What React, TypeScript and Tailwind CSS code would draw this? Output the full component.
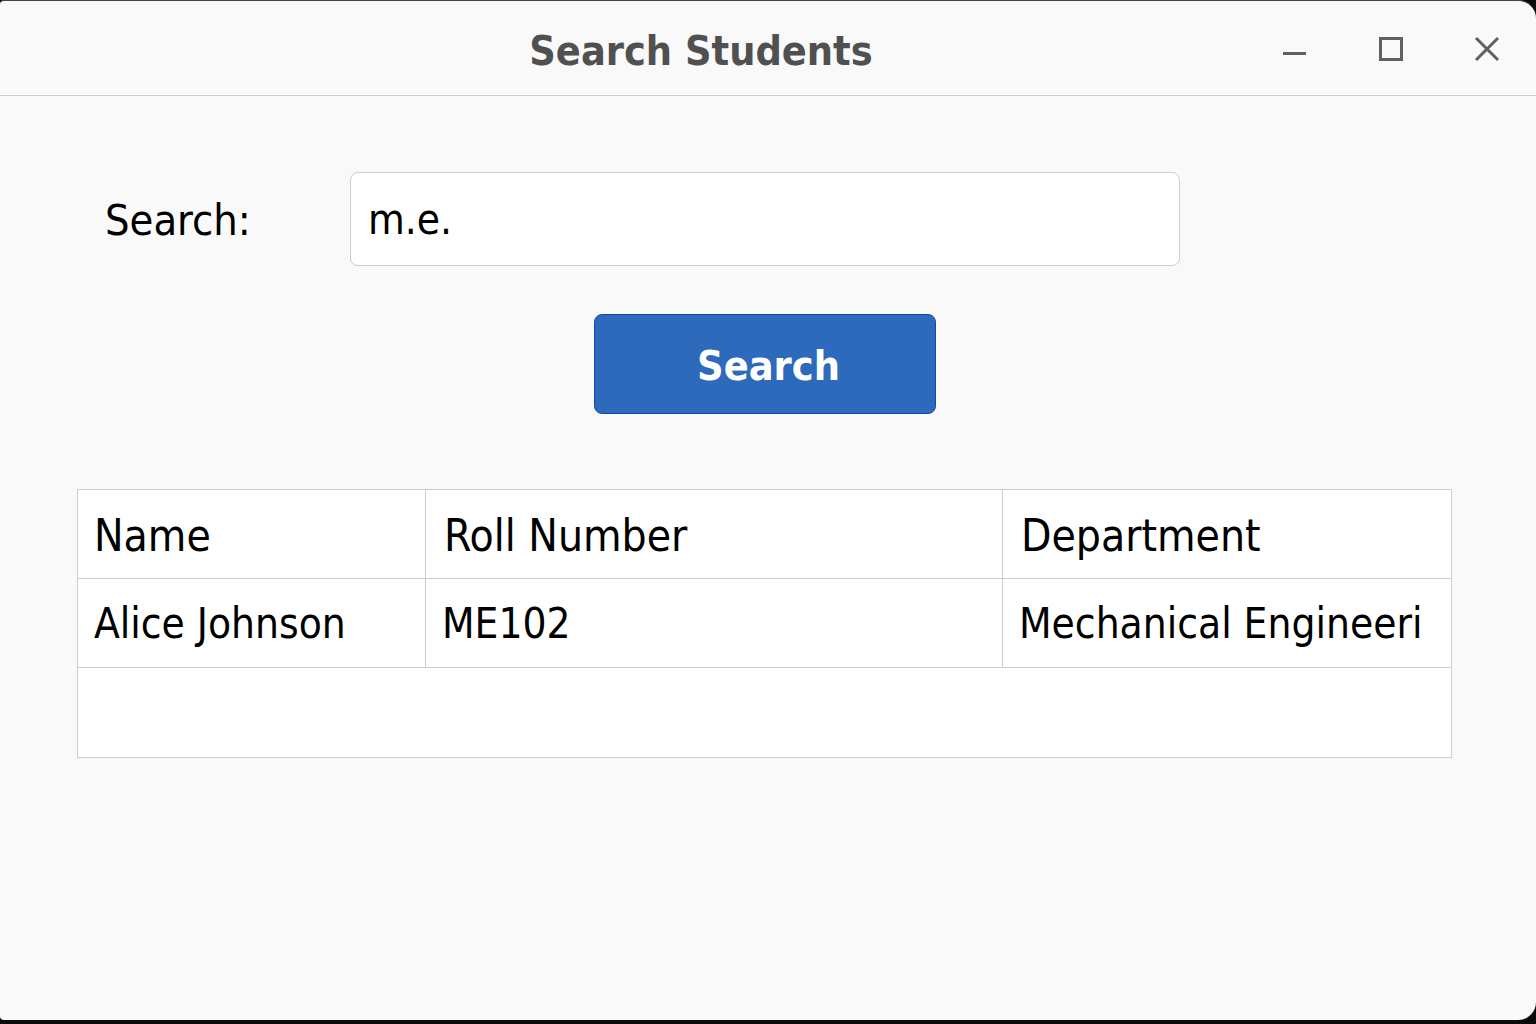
import { useState } from "react";

const head = "border border-[#cdcdcd] pt-1 pb-0 text-left text-[44px] font-normal whitespace-nowrap";
const cell = "border border-[#cdcdcd] px-4 pt-0.5 pb-0 text-left whitespace-nowrap";

export default function App() {
  const [query, setQuery] = useState("m.e.");
  return (
    <div className="min-h-screen bg-[#0a0a0a] flex flex-col pb-1 font-['DejaVu_Sans_Condensed','DejaVu_Sans',sans-serif] text-black">
      <div className="flex-1 flex flex-col rounded-l-sm rounded-r-[18px] border-t border-[#444444] bg-[#f9f9f9] overflow-hidden">
        <header className="h-[95px] shrink-0 border-b border-[#cdcdcd] flex items-center pl-[125px]">
          <h1 className="flex-1 pt-1.5 text-center text-[41px] leading-12 font-bold text-[#505050]">Search Students</h1>
          <div className="flex items-center gap-[60px] pr-[31px] text-[#606060]">
            <button type="button" aria-label="Minimize">
              <svg width="36" height="36" viewBox="0 0 36 36" fill="none" stroke="currentColor" strokeWidth="3"><path d="M6 23.5H29" /></svg>
            </button>
            <button type="button" aria-label="Maximize">
              <svg width="36" height="36" viewBox="0 0 36 36" fill="none" stroke="currentColor" strokeWidth="3"><path d="M7.5 8.5H28.5V29.5H7.5Z" /></svg>
            </button>
            <button type="button" aria-label="Close">
              <svg width="36" height="36" viewBox="0 0 36 36" fill="none" stroke="currentColor" strokeWidth="3"><path d="M7 8L29 30M29 8L7 30" /></svg>
            </button>
          </div>
        </header>
        <main className="pl-[77px] pr-[84px] pt-[76px] pb-12 text-[42px] leading-12">
          <form onSubmit={(e) => e.preventDefault()}>
            <div className="flex items-center pl-7">
              <label htmlFor="query" className="w-[245px] shrink-0 pt-0.5 text-[43px]">Search:</label>
              <input
                id="query"
                type="text"
                value={query}
                onChange={(e) => setQuery(e.target.value)}
                className="mr-[272px] h-[94px] min-w-0 flex-1 rounded-lg border border-[#cdcdcd] bg-white px-[17px] outline-none"
              />
            </div>
            <button type="submit" className="mx-auto mt-12 block h-[100px] w-[342px] rounded-lg border border-[#0d4bae] bg-[#2d6abb] pt-1 pl-2 text-[41px] font-bold text-white">
              Search
            </button>
          </form>
          <table className="mt-[75px] w-full table-fixed border-collapse bg-white">
            <colgroup>
              <col className="w-[348px]" />
              <col className="w-[577px]" />
              <col />
            </colgroup>
            <thead>
              <tr className="h-[89px]">
                <th scope="col" className={`${head} pl-4`}>Name</th>
                <th scope="col" className={`${head} pl-[18px]`}>Roll Number</th>
                <th scope="col" className={`${head} pl-[18px]`}>Department</th>
              </tr>
            </thead>
            <tbody>
              <tr className="h-[89px]">
                <td className={cell}>Alice Johnson</td>
                <td className={cell}>ME102</td>
                <td className={cell}>Mechanical Engineeri</td>
              </tr>
              <tr className="h-[90px]">
                <td colSpan={3} className={cell} />
              </tr>
            </tbody>
          </table>
        </main>
      </div>
    </div>
  );
}
